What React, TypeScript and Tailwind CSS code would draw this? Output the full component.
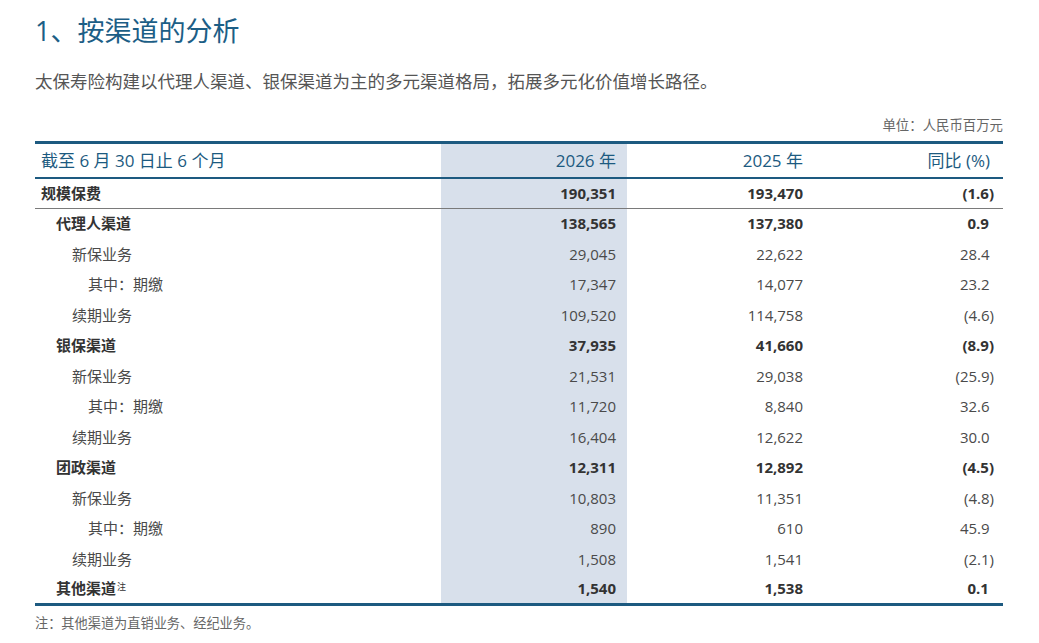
const rows: { label: string; level: number; bold?: boolean; note?: boolean; v: [string, string, string]; line?: boolean }[] = [
  { label: "规模保费", level: 0, bold: true, v: ["190,351", "193,470", "(1.6)"], line: true },
  { label: "代理人渠道", level: 1, bold: true, v: ["138,565", "137,380", "0.9"] },
  { label: "新保业务", level: 2, v: ["29,045", "22,622", "28.4"] },
  { label: "其中：期缴", level: 3, v: ["17,347", "14,077", "23.2"] },
  { label: "续期业务", level: 2, v: ["109,520", "114,758", "(4.6)"] },
  { label: "银保渠道", level: 1, bold: true, v: ["37,935", "41,660", "(8.9)"] },
  { label: "新保业务", level: 2, v: ["21,531", "29,038", "(25.9)"] },
  { label: "其中：期缴", level: 3, v: ["11,720", "8,840", "32.6"] },
  { label: "续期业务", level: 2, v: ["16,404", "12,622", "30.0"] },
  { label: "团政渠道", level: 1, bold: true, v: ["12,311", "12,892", "(4.5)"] },
  { label: "新保业务", level: 2, v: ["10,803", "11,351", "(4.8)"] },
  { label: "其中：期缴", level: 3, v: ["890", "610", "45.9"] },
  { label: "续期业务", level: 2, v: ["1,508", "1,541", "(2.1)"] },
  { label: "其他渠道", level: 1, bold: true, note: true, v: ["1,540", "1,538", "0.1"] },
];

const indent = ["pl-[6px]", "pl-[21px]", "pl-[37px]", "pl-[53px]"];

const Pct = ({ value }: { value: string }) => {
  const neg = value.startsWith("(");
  return (
    <span>
      {value}
      {!neg && <span className="invisible">)</span>}
    </span>
  );
};

export default function App() {
  return (
    <div
      className="min-h-screen bg-white pl-[35px] pr-[36px] pt-[12px]"
      style={{ fontFamily: '"Open Sans", "Noto Sans CJK SC", sans-serif' }}
    >
      <h1 className="text-[27px] leading-[38px] text-[#1c5e86]">1、按渠道的分析</h1>
      <p className="mt-[19px] text-[17.5px] leading-[24px] text-[#555]">
        太保寿险构建以代理人渠道、银保渠道为主的多元渠道格局，拓展多元化价值增长路径。
      </p>
      <div className="mt-[23px] text-right text-[13.4px] leading-[18px] text-[#666]">单位：人民币百万元</div>
      <table className="mt-[7px] w-[968px] table-fixed border-collapse">
        <colgroup>
          <col className="w-[406px]" />
          <col className="w-[186px]" />
          <col className="w-[188px]" />
          <col className="w-[188px]" />
        </colgroup>
        <thead>
          <tr className="h-[35px] border-t-[3px] border-b-2 border-[#1d5a80] text-[17px] text-[#1c5a80]">
            <th className="pl-[6px] text-left font-normal">截至 6 月 30 日止 6 个月</th>
            <th className="bg-[#d8e0eb] pr-[11px] text-right font-normal">2026 年</th>
            <th className="pr-[12px] text-right font-normal">2025 年</th>
            <th className="pr-[13px] text-right font-normal">同比 (%)</th>
          </tr>
        </thead>
        <tbody className="border-b-[3px] border-[#1d5a80] text-[15px] text-[#4a4a4a]">
          {rows.map((r, i) => (
            <tr
              key={i}
              className={`h-[30.5px] ${r.line ? "border-b border-[#7a7a7a]" : ""} ${
                r.bold ? "font-bold text-[#333]" : ""
              }`}
            >
              <td className={`${indent[r.level]} text-left`}>
                {r.label}
                {r.note && <sup className="ml-[1px] text-[9px] font-normal">注</sup>}
              </td>
              <td className="bg-[#d8e0eb] pr-[11px] text-right">{r.v[0]}</td>
              <td className="pr-[12px] text-right">{r.v[1]}</td>
              <td className="pr-[9px] text-right">
                <Pct value={r.v[2]} />
              </td>
            </tr>
          ))}
        </tbody>
      </table>
      <p className="mt-[8px] text-[13.2px] leading-[18px] text-[#666]">注：其他渠道为直销业务、经纪业务。</p>
    </div>
  );
}
